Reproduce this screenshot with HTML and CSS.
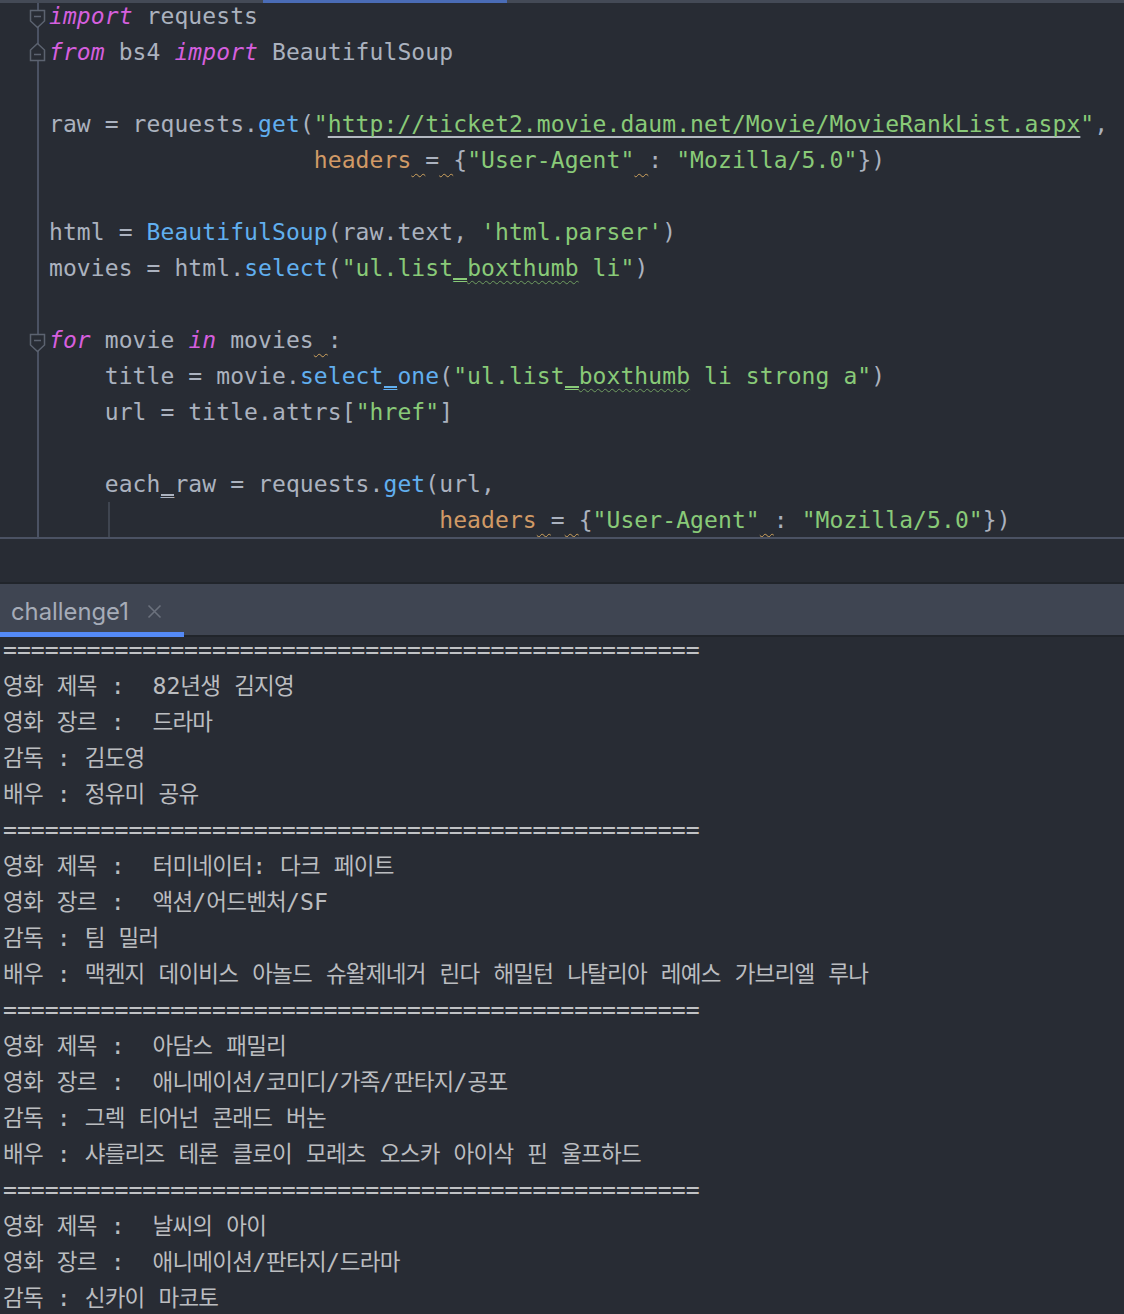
FILE: index.html
```html
<!DOCTYPE html>
<html lang="ko">
<head>
<meta charset="utf-8">
<title>challenge1</title>
<link rel="stylesheet" href="styles.css">
</head>
<body>
<div class="topstrip"><div class="topseg"></div></div>
<div class="editor">
  <div class="lines">
    <div class="line"><div class="gut"><svg class="fold fold-start" width="17" height="20" viewBox="0 0 17 20"><path d="M1.5 1.5H15.5V12L8.5 18.5L1.5 12Z" fill="#282c34" stroke="#5c6370" stroke-width="1.5"/><path d="M5 7.5H12" stroke="#5c6370" stroke-width="1.5"/></svg></div><div class="code"><span class="k">import</span> requests</div></div>
    <div class="line"><div class="gut"><svg class="fold fold-end" width="17" height="20" viewBox="0 0 17 20"><path d="M8.5 1.5L15.5 8V18.5H1.5V8Z" fill="#282c34" stroke="#5c6370" stroke-width="1.5"/><path d="M5 12.5H12" stroke="#5c6370" stroke-width="1.5"/></svg></div><div class="code"><span class="k">from</span> bs4 <span class="k">import</span> BeautifulSoup</div></div>
    <div class="line"><div class="gut"></div><div class="code"> </div></div>
    <div class="line"><div class="gut"></div><div class="code">raw = requests.<span class="f">get</span>(<span class="s">"<span class="url">http://ticket2.movie.daum.net/Movie/MovieRankList.aspx</span>"</span>,</div></div>
    <div class="line"><div class="gut"></div><div class="code">                   <span class="p">headers</span><span class="w"> </span>=<span class="w"> </span>{<span class="s">"User-Agent"</span><span class="w"> </span>: <span class="s">"Mozilla/5.0"</span>})</div></div>
    <div class="line"><div class="gut"></div><div class="code"> </div></div>
    <div class="line"><div class="gut"></div><div class="code">html = <span class="f">BeautifulSoup</span>(raw.text, <span class="s">'html.parser'</span>)</div></div>
    <div class="line"><div class="gut"></div><div class="code">movies = html.<span class="f">select</span>(<span class="s">"ul.list<span class="us">_</span><span class="t">boxthumb</span> li"</span>)</div></div>
    <div class="line"><div class="gut"></div><div class="code"> </div></div>
    <div class="line"><div class="gut"><svg class="fold fold-start" width="17" height="20" viewBox="0 0 17 20"><path d="M1.5 1.5H15.5V12L8.5 18.5L1.5 12Z" fill="#282c34" stroke="#5c6370" stroke-width="1.5"/><path d="M5 7.5H12" stroke="#5c6370" stroke-width="1.5"/></svg></div><div class="code"><span class="k">for</span> movie <span class="k">in</span> movies<span class="w"> </span>:</div></div>
    <div class="line"><div class="gut"></div><div class="code">    title = movie.<span class="f">select<span class="us">_</span>one</span>(<span class="s">"ul.list<span class="us">_</span><span class="t">boxthumb</span> li strong a"</span>)</div></div>
    <div class="line"><div class="gut"></div><div class="code">    url = title.attrs[<span class="s">"href"</span>]</div></div>
    <div class="line"><div class="gut"></div><div class="code"> </div></div>
    <div class="line"><div class="gut"></div><div class="code">    each<span class="us">_</span>raw = requests.<span class="f">get</span>(url,</div></div>
    <div class="line"><div class="gut"></div><div class="code">    <span class="ig"></span>                       <span class="p">headers</span><span class="w"> </span>=<span class="w"> </span>{<span class="s">"User-Agent"</span><span class="w"> </span>: <span class="s">"Mozilla/5.0"</span>})</div></div>
  </div>
</div>
<div class="spacer"></div>
<div class="tabbar">
  <div class="tab"><span class="tabname">challenge1</span><svg class="close" width="15" height="15" viewBox="0 0 15 15"><path d="M1.5 1.5L13.5 13.5M13.5 1.5L1.5 13.5" stroke="#6b717d" stroke-width="1.6"/></svg></div>
</div>
<div class="console">
<div class="cl sep">==================================================</div>
<div class="cl"><span class="h">영화</span> <span class="h">제목</span> :  82<span class="h">년생</span> <span class="h">김지영</span></div>
<div class="cl"><span class="h">영화</span> <span class="h">장르</span> :  <span class="h">드라마</span></div>
<div class="cl"><span class="h">감독</span> : <span class="h">김도영</span></div>
<div class="cl"><span class="h">배우</span> : <span class="h">정유미</span> <span class="h">공유</span></div>
<div class="cl sep">==================================================</div>
<div class="cl"><span class="h">영화</span> <span class="h">제목</span> :  <span class="h">터미네이터</span>: <span class="h">다크</span> <span class="h">페이트</span></div>
<div class="cl"><span class="h">영화</span> <span class="h">장르</span> :  <span class="h">액션</span>/<span class="h">어드벤처</span>/SF</div>
<div class="cl"><span class="h">감독</span> : <span class="h">팀</span> <span class="h">밀러</span></div>
<div class="cl"><span class="h">배우</span> : <span class="h">맥켄지</span> <span class="h">데이비스</span> <span class="h">아놀드</span> <span class="h">슈왈제네거</span> <span class="h">린다</span> <span class="h">해밀턴</span> <span class="h">나탈리아</span> <span class="h">레예스</span> <span class="h">가브리엘</span> <span class="h">루나</span></div>
<div class="cl sep">==================================================</div>
<div class="cl"><span class="h">영화</span> <span class="h">제목</span> :  <span class="h">아담스</span> <span class="h">패밀리</span></div>
<div class="cl"><span class="h">영화</span> <span class="h">장르</span> :  <span class="h">애니메이션</span>/<span class="h">코미디</span>/<span class="h">가족</span>/<span class="h">판타지</span>/<span class="h">공포</span></div>
<div class="cl"><span class="h">감독</span> : <span class="h">그렉</span> <span class="h">티어넌</span> <span class="h">콘래드</span> <span class="h">버논</span></div>
<div class="cl"><span class="h">배우</span> : <span class="h">샤를리즈</span> <span class="h">테론</span> <span class="h">클로이</span> <span class="h">모레츠</span> <span class="h">오스카</span> <span class="h">아이삭</span> <span class="h">핀</span> <span class="h">울프하드</span></div>
<div class="cl sep">==================================================</div>
<div class="cl"><span class="h">영화</span> <span class="h">제목</span> :  <span class="h">날씨의</span> <span class="h">아이</span></div>
<div class="cl"><span class="h">영화</span> <span class="h">장르</span> :  <span class="h">애니메이션</span>/<span class="h">판타지</span>/<span class="h">드라마</span></div>
<div class="cl"><span class="h">감독</span> : <span class="h">신카이</span> <span class="h">마코토</span></div>
</div>
</body>
</html>
```
FILE: styles.css
```css
* { box-sizing: border-box; }
html, body { margin: 0; padding: 0; }
body {
  background: #282c34;
  width: 1124px;
  height: 1314px;
  overflow: hidden;
  font-family: "DejaVu Sans Mono", "Noto Sans CJK KR", monospace;
}

/* top editor tab strip edge */
.topstrip {
  height: 3px;
  background: #444a56;
  display: flex;
}
.topseg {
  margin-left: 263px;
  width: 244px;
  background: #4a6cb6;
}

/* editor */
.editor {
  height: 536px;
  overflow: hidden;
  border-bottom: 2px solid #4b5263;
  background: linear-gradient(to right, transparent 37px, #4b5263 37px, #4b5263 39px, transparent 39px);
}
.lines { margin-top: -4.7px; }
.line {
  display: flex;
  height: 36px;
}
.gut {
  width: 49px;
  flex: none;
  display: flex;
  align-items: flex-start;
}
.fold { display: block; margin-left: 29px; }
.fold-start { margin-top: 11px; }
.fold-end { margin-top: 8px; }
.code {
  white-space: pre;
  font-size: 23px;
  letter-spacing: 0.09px;
  line-height: 36px;
  color: #abb2bf;
}
.k { color: #d55fde; font-style: italic; }
.f { color: #61afef; }
.s { color: #89ca78; }
.p { color: #d19a66; }
.us {
  background: linear-gradient(to top, transparent 1px, currentColor 1px, currentColor 2.8px, transparent 2.8px);
}
.url {
  text-decoration: underline;
  text-decoration-color: #b4b9c2;
  text-decoration-thickness: 1.5px;
  text-underline-offset: 4px;
}
.w {
  text-decoration: underline wavy #d0a45e;
  text-decoration-thickness: 1px;
  text-underline-offset: 5px;
}
.t {
  text-decoration: underline wavy #6f9d60;
  text-decoration-thickness: 1px;
  text-underline-offset: 4px;
}
.ig {
  display: inline-block;
  width: 13.94px;
  height: 36px;
  vertical-align: top;
  background: linear-gradient(to right, transparent 3px, #3f4550 3px, #3f4550 5px, transparent 5px);
}

/* gap between editor and tool window */
.spacer {
  height: 45px;
  border-bottom: 2px solid #21252b;
}

/* tool window tab bar */
.tabbar {
  height: 53px;
  background: #3f4552;
  border-bottom: 2px solid #21252b;
  display: flex;
  align-items: flex-start;
}
.tab {
  width: 184px;
  height: 53px;
  flex: none;
  padding: 7px 0 0 11px;
  border-bottom: 5px solid #548af7;
  display: flex;
  align-items: center;
}
.tabname {
  font-family: "Inter", "Noto Sans", sans-serif;
  font-size: 23.8px;
  color: #a6acb8;
  line-height: 30px;
}
.close { display: block; margin-left: 18px; }

/* console output */
.console {
  margin-top: -7px;
  padding-left: 3px;
}
.cl {
  white-space: pre;
  font-size: 23.15px;
  line-height: 36px;
  height: 36px;
  color: #bbbdc0;
}
.sep {
  padding-top: 2px;
  color: #c0c2c5;
}
.h {
  font-family: "Noto Sans CJK KR", sans-serif;
  font-size: 22.5px;
  letter-spacing: -0.76px;
}
```
